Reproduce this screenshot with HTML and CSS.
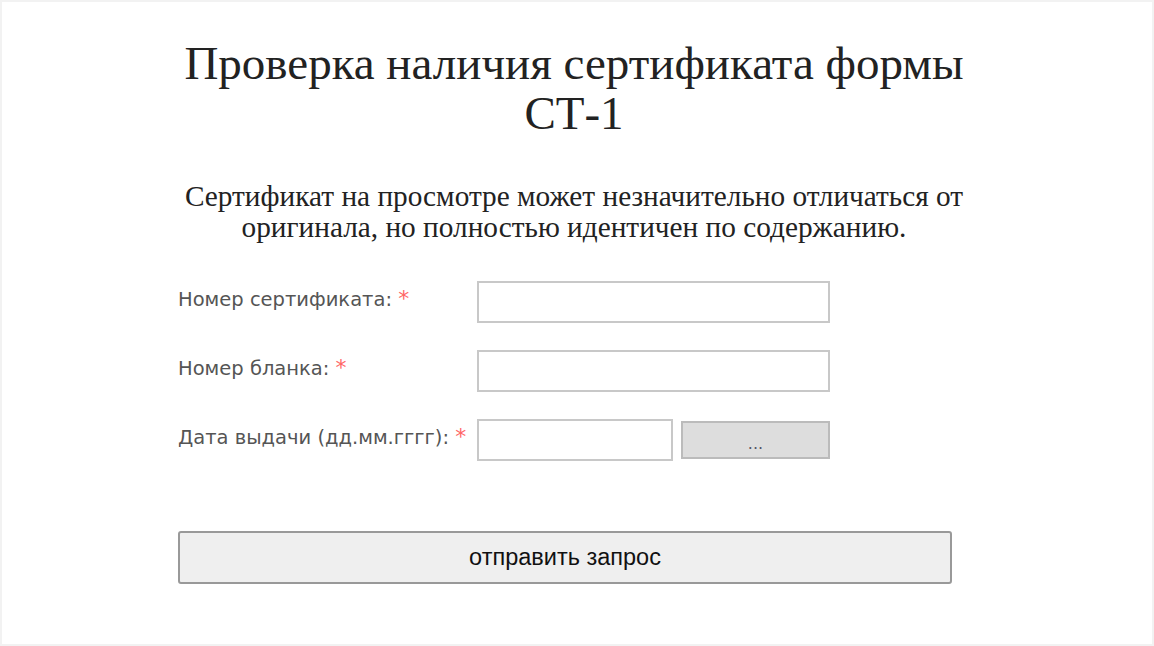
FILE: index.html
```html
<!DOCTYPE html>
<html>
<head>
    <title>Проверка сертификата</title>
    <meta charset="UTF-8">
    <meta name="viewport" content="width=device-width, initial-scale=1.0">
<link rel="stylesheet" href="styles.css">
</head>
<body>

<div class="page">
    <div class="check">
        <h1 class="check-title">Проверка наличия сертификата формы СТ-1</h1>
        <p class="check-note">Сертификат на просмотре может незначительно отличаться от оригинала, но полностью идентичен по содержанию.</p>

        <form class="form">
            <div class="form-row">
                <label class="form-label" for="number">Номер сертификата: <span>*</span></label>
                <input class="form-input" id="number" type="text">
            </div>
            <div class="form-row">
                <label class="form-label" for="blank">Номер бланка: <span>*</span></label>
                <input class="form-input" id="blank" type="text">
            </div>
            <div class="form-row">
                <label class="form-label" for="date">Дата выдачи (дд.мм.гггг): <span>*</span></label>
                <div class="form-date">
                    <input class="form-input" id="date" type="text">
                    <button class="form-pick" type="button">...</button>
                </div>
            </div>
            <button class="form-submit" type="button">отправить запрос</button>
        </form>
    </div>
</div>

</body>
</html>
```

FILE: styles.css
```css
/* page */
    body{
        padding:0;
        margin:0;
        background-color:#fff;
    }
    .page{
        height:100vh;
        box-sizing:border-box;
        border:2px solid #f2f2f2;
    }
    .check{
        width:792px;
        margin-left:176px;
        padding-top:36px;
    }
/* texts */
    .check-title{
        margin:0;
        font:normal 47px "Liberation Serif", serif;
        line-height:50px;
        color:#222;
        text-align:center;
    }
    .check-note{
        margin:43px 0 0 0;
        font:normal 29.3px "Liberation Serif", serif;
        line-height:31px;
        color:#222;
        text-align:center;
    }
/* form */
    .form{
        width:774px;
        margin-top:38px;
    }
    .form-row{
        display:flex;
        align-items:flex-start;
        margin-bottom:27px;
    }
    .form-label{
        width:299px;
        padding-top:6px;
        font:normal 19.5px "DejaVu Sans", sans-serif;
        line-height:23px;
        color:#555;
    }
    .form-label span{
        color:#f66;
        font-size:22px;
    }
    .form-input{
        width:353px;
        height:42px;
        box-sizing:border-box;
        margin:0;
        border:2px solid #c8c8c8;
        background-color:#fff;
    }
    .form-date{
        display:flex;
        gap:8px;
    }
    .form-date .form-input{
        width:196px;
    }
    .form-pick{
        width:149px;
        height:38px;
        margin-top:2px;
        border:2px solid #bbb;
        background-color:#ddd;
        color:#556;
        font:normal 16px "DejaVu Sans", sans-serif;
        padding-top:8px;
    }
    .form-submit{
        display:block;
        width:774px;
        height:53px;
        margin-top:70px;
        border:2px solid #999;
        border-radius:3px;
        background-color:#efefef;
        font:normal 23.5px "Liberation Sans", sans-serif;
        color:#111;
    }
```
